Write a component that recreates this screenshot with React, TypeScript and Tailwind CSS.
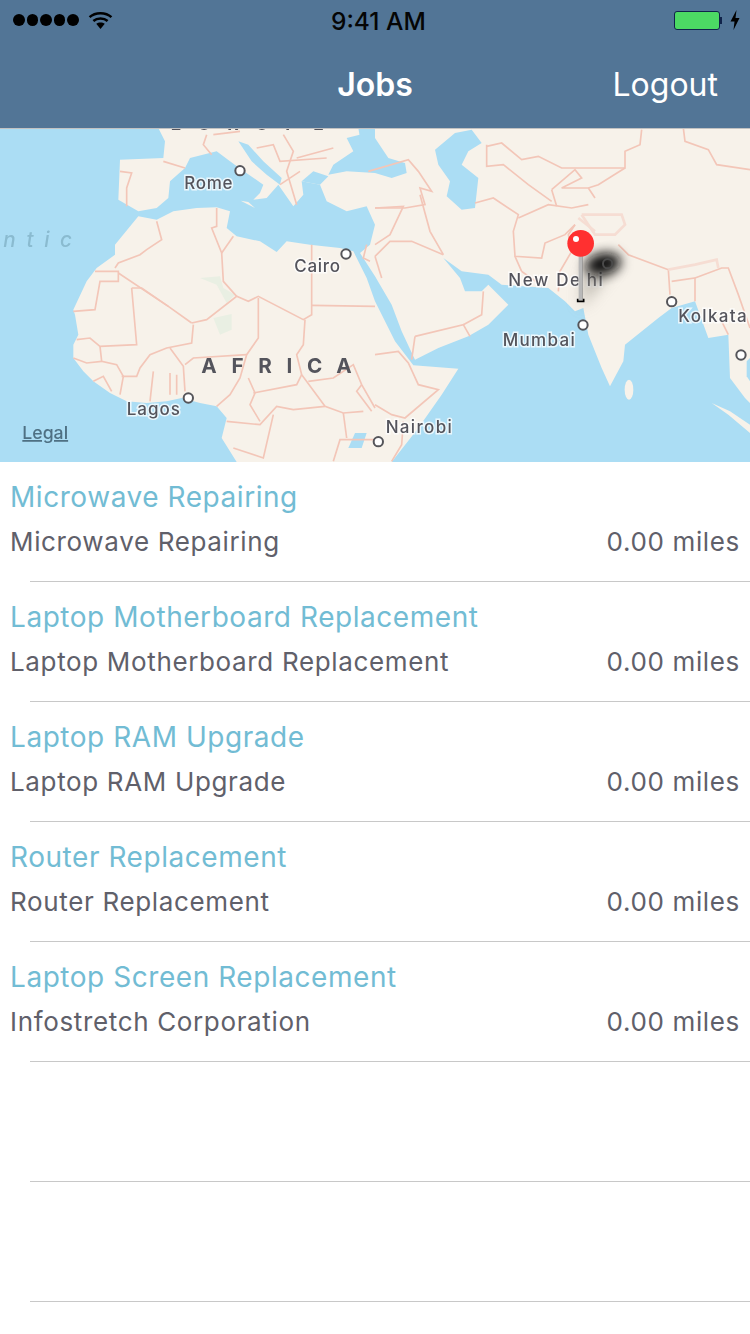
import React from "react";

const F = { fontFamily: "Inter, Roboto, 'Liberation Sans', sans-serif" };

const leftBorders = [
  "M360 130L395 135L380 180L380 235",
  "M490 100L555 120",
  "M470 280L485 335L440 365L420 380L355 405L345 420",
  "M285 430L355 430L355 460L300 460L285 545L220 550",
  "M355 435L505 535L575 585",
  "M395 480L410 650L300 655L270 630L230 635",
  "M395 480L425 480L505 535",
  "M575 585L620 575L710 505L745 520L775 505L910 575L935 560L935 350",
  "M935 532L1125 535",
  "M580 590L575 645L500 660L450 680L420 720L410 745L365 745",
  "M650 240L650 295L635 300L665 375L670 460L710 505",
  "M700 325L665 375",
  "M915 575L910 650L890 680L905 740L975 835L1030 855L1090 850",
  "M775 510L775 630L740 680L720 750L690 800L650 835",
  "M555 710L580 690L740 680",
  "M510 660L550 715L555 790",
  "M510 735L510 800M530 740L530 800",
  "M460 730L450 820",
  "M300 655L305 700L350 710L370 745L360 800",
  "M220 690L260 705L305 700",
  "M280 760L310 745L335 790",
  "M680 880L780 890L830 835L880 845L975 835",
  "M760 795L890 770L905 740",
  "M745 750L765 795L750 830L780 880",
  "M1000 1000L1020 935L1125 935",
  "M925 760L1000 750L1060 710L1085 770L1125 840",
  "M1085 770L1070 790L1115 850",
  "M820 860L790 990L700 960",
  "M1030 855L1040 930",
  "M620 20L610 50L635 80M640 20L720 10",
  "M850 20L880 70L860 130L890 230",
  "M770 60L820 50L840 100L980 90",
  "M890 90L1000 60M840 170L900 130",
  "M1100 350L1090 390L1110 400",
];

const rightBorders = [
  "M-20 130L100 95L130 130L170 190L135 180L150 230L90 240L0 240",
  "M0 240L85 235L45 320L0 350",
  "M135 200L165 310L205 380",
  "M205 380L110 340L45 340L0 385",
  "M300 225L355 210L430 260L415 310L420 385L500 390L510 345L570 320L600 290",
  "M430 270L520 230L590 240L640 230",
  "M335 50L335 115L385 110L460 170L530 220",
  "M335 55L380 45L440 95L490 85L560 120L750 120L750 70L795 50L800 5",
  "M925 0L930 40L1000 65L1025 110L1125 125",
  "M530 185L600 125L620 150L560 180L640 180L670 170L750 120",
  "M640 180L660 210M530 185L545 235",
  "M420 385L440 430L490 465",
  "M600 290L580 320L590 370L555 430L550 490",
  "M730 350L760 380L880 425M880 425L885 500M890 460L960 450L960 520",
  "M960 450L1040 420L1060 420L1090 500L1125 600",
  "M1040 580L1060 620",
  "M120 625L265 590L285 625",
  "M325 490L320 560L265 590",
  "M120 625L110 695",
  "M0 680L70 670L100 705L130 770L190 785L90 870L50 860L0 830",
  "M85 880L80 950L50 1000",
  "M0 385L20 450",
];

const lightBorders = [
  "M620 260L740 260L750 290L720 320L660 320L640 290L620 260",
  "M610 270L660 310",
  "M880 425L960 410L1025 395L1030 420",
];

const labelStyle = {
  fontSize: 51,
  fontWeight: 500,
  fill: "#54545c",
  stroke: "#ffffff",
  strokeOpacity: 0.75,
  strokeWidth: 9,
};

function label(x: number, y: number, t: string, ls = 2) {
  return (
    <text key={t} x={x} y={y} letterSpacing={ls} {...labelStyle} style={{ paintOrder: "stroke", ...F }}>
      {t}
    </text>
  );
}

function Marker({ x, y }: { x: number; y: number }) {
  return <circle cx={x} cy={y} r={14} fill="#fff" stroke="#55555a" strokeWidth={6} />;
}

function MapView() {
  const land = "#f7f2ea";
  const sea = "#abddf4";
  return (
    <svg viewBox="0 0 2250 1002" className="block h-[334px] w-[750px]" preserveAspectRatio="none">
      <defs>
        <filter id="b1" x="-50%" y="-50%" width="200%" height="200%">
          <feGaussianBlur stdDeviation="22" />
        </filter>
        <filter id="b2" x="-50%" y="-50%" width="200%" height="200%">
          <feGaussianBlur stdDeviation="18" />
        </filter>
      </defs>
      <rect width="2250" height="1002" fill={sea} />
      {/* Africa */}
      <path
        fill={land}
        d="M415 265L470 275L520 250L590 240L650 238L690 250L680 300L710 325L780 340L830 372L860 340L930 350L1020 360L1060 370L1100 450L1125 520L1155 580L1185 640L1240 712L1375 722L1325 800L1255 900L1175 1002L710 1002L665 930L680 870L650 835L600 825L545 810L500 820L440 825L380 820L330 795L280 760L250 730L220 690L220 650L235 620L225 560L220 545L260 460L290 420L345 380L345 350Z"
      />
      {/* Eurasia */}
      <path
        fill={land}
        d="M475 0L495 40L490 90L360 95L355 215L415 250L470 240L505 210L510 160L555 120L570 90L650 70L690 100L725 125L790 170L780 195L760 215L800 210L835 170L880 235L910 200L905 160L960 170L980 220L1040 250L1100 235L1125 290L1110 350L1080 375L1125 445L1175 530L1205 610L1245 695L1315 660L1405 625L1465 590L1525 530L1465 470L1445 490L1395 490L1380 450L1330 390L1385 430L1465 440L1505 470L1645 480L1695 520L1725 550L1750 540L1765 620L1805 720L1830 775L1870 700L1875 650L1975 570L2015 540L2085 520L2125 630L2185 620L2190 750L2235 810L2250 825L2250 0Z"
      />
      {/* Inner seas */}
      <path fill={sea} d="M715 40L745 50L790 100L845 150L840 170L800 140L755 100Z" />
      <path fill={sea} d="M905 160L940 130L985 145L960 170Z" />
      <path
        fill={sea}
        d="M985 140L1000 110L1060 70L1040 30L1100 15L1125 30L1165 90L1215 105L1220 135L1175 150L1125 135L1040 130Z"
      />
      <path
        fill={sea}
        d="M1305 65L1365 15L1415 5L1445 45L1405 70L1385 110L1435 150L1425 240L1385 245L1340 205L1350 160L1315 110Z"
      />
      <path fill={sea} d="M1075 0L1125 0L1125 40L1100 40L1080 30Z" />
      <path fill={land} d="M722 218L765 240L745 222Z" />
      <ellipse cx={1887} cy={785} rx={13} ry={30} fill={land} />
      <path fill={land} d="M2135 825L2185 860L2250 915L2250 890L2190 850Z" />
      <path fill={sea} d="M2240 700L2250 690L2250 760L2240 745Z" />
      <path fill={sea} d="M1045 960L1065 915L1100 915L1085 960Z" />
      <path fill="#e9efe3" d="M640 570L695 558L695 605L660 620Z" />
      <path fill="#e9efe3" d="M600 450L660 445L670 480L705 500L680 525L650 470Z" />
      <g fill="none" stroke="#f3c6b8" strokeWidth={5}>
        {leftBorders.map((d) => (
          <path key={d} d={d} />
        ))}
        <g transform="translate(1125 0)">
          {rightBorders.map((d) => (
            <path key={d} d={d} />
          ))}
          <g stroke="#f6ddd3" strokeWidth={8}>
            {lightBorders.map((d) => (
              <path key={d} d={d} />
            ))}
          </g>
        </g>
      </g>
      {/* labels left */}
      <text x={512} y={5} fontSize={52} fontWeight={700} fill="#54545c" letterSpacing={50} style={F}>
        EUROPE
      </text>
      {label(553, 183, "Rome")}
      {label(883, 432, "Cairo")}
      {label(380, 862, "Lagos", 3)}
      <text x={604} y={735} fontSize={62} fontWeight={700} fill="#54545c" letterSpacing={44} style={F}>
        AFRICA
      </text>
      <text x={10} y={357} fontSize={62} fontWeight={500} fontStyle="italic" fill="#8abbd0" letterSpacing={32} style={F}>
        ntic
      </text>
      <text x={67} y={933} fontSize={53} fontWeight={500} fill="#4e7083" textDecoration="underline" style={F}>
        Legal
      </text>
      <Marker x={720} y={128} />
      <Marker x={1038} y={378} />
      <Marker x={565} y={810} />
      <g transform="translate(1125 0)">
        {label(32, 915, "Nairobi", 4)}
        {label(383, 655, "Mumbai", 4)}
        {label(910, 583, "Kolkata", 4)}
        <text y={473} letterSpacing={5} {...labelStyle} style={{ paintOrder: "stroke", ...F }}>
          <tspan x={400}>New De</tspan>
          <tspan x={611}>l</tspan>
          <tspan x={635}>hi</tspan>
        </text>
        <Marker x={10} y={941} />
        <Marker x={624} y={591} />
        <Marker x={890} y={521} />
        <Marker x={1098} y={681} />
        {/* pin shadow */}
        <path d="M618 540L632 420L730 395Z" fill="#8f8a80" opacity={0.6} filter="url(#b1)" />
        <ellipse
          cx={684}
          cy={408}
          rx={54}
          ry={32}
          transform="rotate(-12 684 408)"
          fill="#0a0a0a"
          filter="url(#b2)"
        />
        <circle cx={698} cy={407} r={14} fill="none" stroke="#4a4a4a" strokeWidth={6} />
        {/* pin */}
        <rect x={611} y={382} width={10} height={134} fill="#b8b8b8" />
        <rect x={621} y={382} width={2} height={134} fill="#8c8c8c" />
        <path d="M608 512V520H626V512" fill="none" stroke="#000" strokeWidth={5} />
        <circle cx={617} cy={346} r={40} fill="#ff3030" />
        <circle cx={603} cy={333} r={9} fill="#fff" />
      </g>
    </svg>
  );
}

function StatusBar() {
  return (
    <div className="relative flex h-10 items-center justify-between pl-[13px] pr-[10px]">
      <div className="flex items-center">
        <div className="flex gap-[2px]">
          {[0, 1, 2, 3, 4].map((i) => (
            <div key={i} className="h-[11.5px] w-[11.5px] rounded-full bg-black" />
          ))}
        </div>
        <svg width="25" height="19" viewBox="0 0 26 20" className="ml-[9px]">
          <g fill="none" stroke="#000" strokeWidth="2.6">
            <path d="M1.5 6.5C7.5 1 18.5 1 24.5 6.5" />
            <path d="M5.5 10.5C9.5 7 16.5 7 20.5 10.5" />
          </g>
          <path d="M8.5 13.5C11 11.5 15 11.5 17.5 13.5L13 19Z" fill="#000" />
        </svg>
      </div>
      <div
        className="absolute left-[331px] top-[7px] text-[24.5px] leading-[28px] font-medium text-[#050505]"
        style={F}
      >
        9:41 AM
      </div>
      <div className="flex items-center gap-[8px]">
        <div className="flex items-center">
          <div className="flex h-[19px] w-[46px] rounded-[3px] border border-[#10234a] bg-[#4cd964]" />
          <div className="h-[7px] w-[2px] bg-[#10234a]" />
        </div>
        <svg width="10" height="20" viewBox="0 0 10 20">
          <path d="M6.5 0L0.5 11.5H4.5L3.5 20L9.5 8H5.5Z" fill="#000" />
        </svg>
      </div>
    </div>
  );
}

function Row({ title, sub, dist }: { title?: string; sub?: string; dist?: string }) {
  return (
    <div className="flex h-[120px] flex-col">
      <div className="flex flex-1 flex-col pl-[10px] pr-[10px] pt-[15px]" style={F}>
        {title && <div className="text-[28px] leading-[40px] tracking-[0.55px] text-[#72bcd4]">{title}</div>}
        {sub && (
          <div className="mt-[5px] flex justify-between text-[26px] leading-[40px] tracking-[0.65px] text-[#60606a]">
            <span>{sub}</span>
            <span>{dist}</span>
          </div>
        )}
      </div>
      <div className="ml-[30px] h-px bg-[#c8c8c8]" />
    </div>
  );
}

export default function App() {
  const rows = [
    ["Microwave Repairing", "Microwave Repairing"],
    ["Laptop Motherboard Replacement", "Laptop Motherboard Replacement"],
    ["Laptop RAM Upgrade", "Laptop RAM Upgrade"],
    ["Router Replacement", "Router Replacement"],
    ["Laptop Screen Replacement", "Infostretch Corporation"],
  ];
  return (
    <div className="h-[1334px] w-[750px] overflow-hidden bg-white">
      <div className="h-[128px] bg-[#527596]">
        <StatusBar />
        <div className="relative flex h-[88px] items-center justify-center pt-[2px] text-white" style={F}>
          <span className="text-[32px] font-semibold">Jobs</span>
          <span className="absolute right-[32px] text-[32px]">Logout</span>
        </div>
      </div>
      <div className="h-[334px] overflow-hidden border-t border-[#9a9a9a]/60 blur-[0.5px]">
        <div className="-mt-px">
          <MapView />
        </div>
      </div>
      {rows.map(([t, s]) => (
        <Row key={t} title={t} sub={s} dist="0.00 miles" />
      ))}
      <Row />
      <Row />
    </div>
  );
}
